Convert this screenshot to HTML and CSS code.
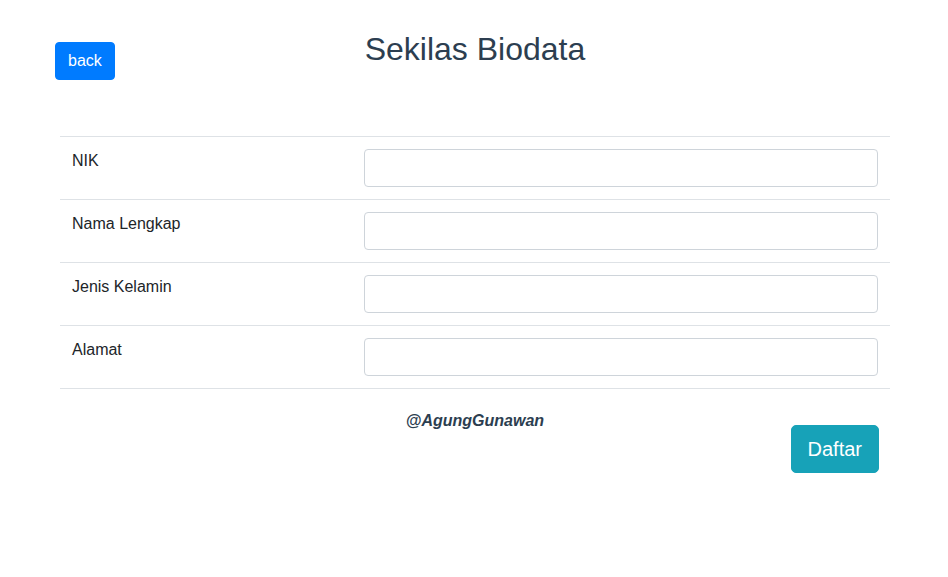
FILE: index.html
```html
<!DOCTYPE html>
<html lang="id">
<head>
<meta charset="utf-8">
<title>Sekilas Biodata</title>
<link rel="stylesheet" href="styles.css">
</head>
<body>
<header class="top">
  <div class="top-left"><a class="btn btn-primary" href="#">back</a></div>
  <h2 class="title">Sekilas Biodata</h2>
  <div></div>
</header>
<form class="form">
  <div class="row"><div class="label">NIK</div><div class="field"><input class="input" type="text"></div></div>
  <div class="row"><div class="label">Nama Lengkap</div><div class="field"><input class="input" type="text"></div></div>
  <div class="row"><div class="label">Jenis Kelamin</div><div class="field"><input class="input" type="text"></div></div>
  <div class="row last"><div class="label">Alamat</div><div class="field"><input class="input" type="text"></div></div>
  <div class="foot">
    <div></div>
    <p class="credit">@AgungGunawan</p>
    <div class="foot-right"><button class="btn btn-info btn-lg" type="button">Daftar</button></div>
  </div>
</form>
</body>
</html>
```
FILE: styles.css
```css
* { box-sizing: border-box; }
html, body { margin: 0; padding: 0; background: #fff; }
body {
  font-family: "Liberation Sans", Arial, sans-serif;
  font-size: 16px;
  line-height: 1.5;
  color: #212529;
}
.top {
  display: grid;
  grid-template-columns: 1fr auto 1fr;
  align-items: start;
  padding-top: 30px;
}
.top-left { padding-left: 55px; padding-top: 12px; }
.title {
  margin: 0 0 0 2px;
  font-size: 32px;
  font-weight: 400;
  line-height: 1.2;
  color: #2c3e50;
  text-align: center;
}
.btn {
  display: inline-block;
  border: 1px solid transparent;
  border-radius: 4px;
  padding: 6px 12px;
  font-family: inherit;
  font-size: 16px;
  line-height: 24px;
  color: #fff;
  text-decoration: none;
  cursor: pointer;
}
.btn-primary { background: #007bff; border-color: #007bff; }
.btn-info { background: #17a2b8; border-color: #17a2b8; }
.btn-lg { padding: 8px 16px; font-size: 20px; line-height: 30px; border-radius: 5px; }
.form {
  width: 830px;
  margin: 56px 0 0 60px;
}
.row {
  display: grid;
  grid-template-columns: 292px 1fr;
  border-top: 1px solid #dee2e6;
}
.row.last { border-bottom: 1px solid #dee2e6; }
.label, .field { padding: 12px; }
.input {
  display: block;
  width: 100%;
  height: 38px;
  border: 1px solid #ced4da;
  border-radius: 4px;
  background: #fff;
  font-family: inherit;
  font-size: 16px;
  padding: 6px 12px;
}
.foot {
  display: grid;
  grid-template-columns: 1fr auto 1fr;
  align-items: start;
  padding-top: 20px;
}
.credit {
  margin: 0;
  font-weight: 700;
  font-style: italic;
  color: #2c3e50;
  text-align: center;
}
.foot-right { display: flex; justify-content: flex-end; padding-top: 16px; padding-right: 11px; }
```
